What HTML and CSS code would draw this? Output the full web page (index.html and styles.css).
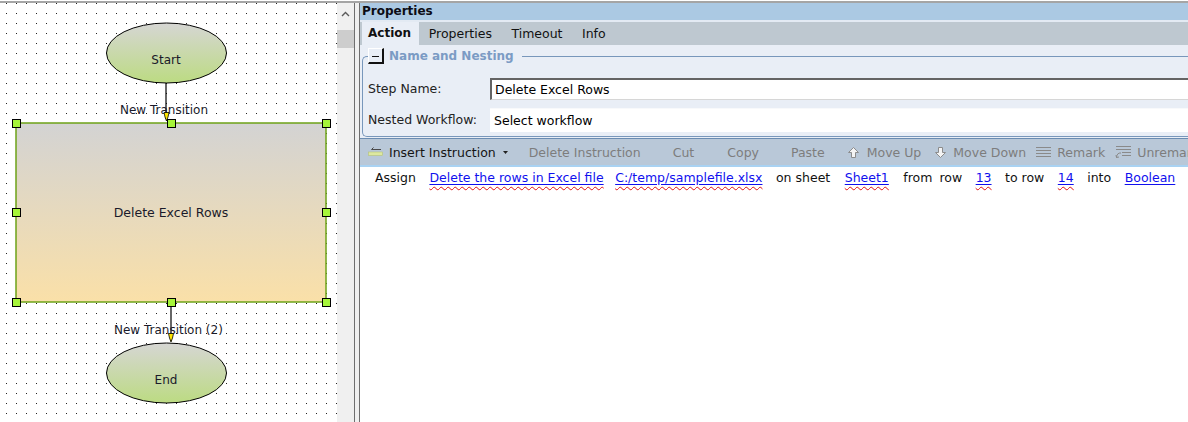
FILE: index.html
```html
<!DOCTYPE html>
<html>
<head>
<meta charset="utf-8">
<title>Workflow</title>
<link rel="stylesheet" href="styles.css">
</head>
<body>
<div class="app">
  <div class="canvas">
    <svg class="diagram" width="337" height="419" viewBox="0 3 337 419">
      <defs>
        <pattern id="dots" x="0" y="0" width="10" height="10" patternUnits="userSpaceOnUse">
          <rect x="6" y="3" width="1" height="1" fill="#202020"/>
        </pattern>
        <linearGradient id="gEll" x1="0" y1="0" x2="0" y2="1">
          <stop offset="0" stop-color="#d6d6d4"/>
          <stop offset="1" stop-color="#bcdb82"/>
        </linearGradient>
        <linearGradient id="gRect" x1="0" y1="0" x2="0" y2="1">
          <stop offset="0" stop-color="#d3d3d3"/>
          <stop offset="1" stop-color="#fae0a8"/>
        </linearGradient>
      </defs>
      <rect x="0" y="3" width="337" height="419" fill="url(#dots)" shape-rendering="crispEdges"/>
      <line x1="166" y1="83" x2="166" y2="119" stroke="#000" stroke-width="1.2"/>
      <ellipse cx="166.5" cy="53" rx="60" ry="30" fill="url(#gEll)" stroke="#000" stroke-width="1"/>
      <text class="lbl" x="166" y="64" text-anchor="middle">Start</text>
      <text class="lbl" x="120" y="114">New Transition</text>
      <polygon points="164,112.5 169,112.5 168,117 166.5,121 165,117" fill="#ffe600" stroke="#000" stroke-width="0.8"/>

      <rect x="16" y="123" width="310" height="179" fill="url(#gRect)" stroke="#6ea318" stroke-width="1.5"/>
      <text class="lbl node" x="171" y="217" text-anchor="middle">Delete Excel Rows</text>

      <line x1="171" y1="302" x2="171" y2="341" stroke="#000" stroke-width="1.2"/>
      <text class="lbl" x="114" y="334">New Transition (2)</text>
      <polygon points="168.5,333.5 173.5,333.5 172.5,338 171,342 169.5,338" fill="#ffe600" stroke="#000" stroke-width="0.8"/>
      <ellipse cx="166.5" cy="373" rx="60" ry="30" fill="url(#gEll)" stroke="#000" stroke-width="1"/>
      <text class="lbl" x="166" y="384" text-anchor="middle">End</text>

      <g fill="#a6f53a" stroke="#000" stroke-width="1">
        <rect x="12.5" y="119.5" width="8" height="8"/>
        <rect x="167.5" y="119.5" width="8" height="8"/>
        <rect x="322.5" y="119.5" width="8" height="8"/>
        <rect x="12.5" y="208.5" width="8" height="8"/>
        <rect x="322.5" y="208.5" width="8" height="8"/>
        <rect x="12.5" y="298.5" width="8" height="8"/>
        <rect x="167.5" y="298.5" width="8" height="8"/>
        <rect x="322.5" y="298.5" width="8" height="8"/>
      </g>
    </svg>
  </div>

  <div class="vscroll">
    <svg class="up" width="9" height="6" viewBox="0 0 9 6"><path d="M1 5 L4.5 1.5 L8 5" fill="none" stroke="#5a5a5a" stroke-width="1.4"/></svg>
    <div class="thumb"></div>
  </div>

  <div class="splitter"></div>

  <div class="panel">
    <div class="ptitle">Properties</div>
    <div class="tabs">
      <div class="tab active">Action</div>
      <div class="tab">Properties</div>
      <div class="tab">Timeout</div>
      <div class="tab">Info</div>
    </div>

    <fieldset class="group">
      <legend><span class="collapse"><span class="minus"></span></span><span>Name and Nesting</span></legend>
      <div class="fields">
        <div class="label">Step Name:</div>
        <div class="inp1">Delete Excel Rows</div>
        <div class="label">Nested Workflow:</div>
        <div class="inp2">Select workflow</div>
      </div>
    </fieldset>

    <div class="toolbar">
      <div class="tbtn ins">
        <svg width="15" height="10" viewBox="0 0 15 10"><path d="M5.5 0.5 L3.5 2.5 L13 2.5" fill="none" stroke="#4a4a4a" stroke-width="1"/><rect x="0.5" y="5" width="14" height="3.5" fill="#dde8a0" stroke="#b5c27a" stroke-width="0.6"/></svg>
        <span class="on">Insert Instruction</span>
        <svg class="caret" width="5" height="3" viewBox="0 0 5 3"><path d="M0 0 H5 L2.5 3 Z" fill="#222"/></svg>
      </div>
      <div class="tbtn del">Delete Instruction</div>
      <div class="tbtn cut">Cut</div>
      <div class="tbtn copy">Copy</div>
      <div class="tbtn paste">Paste</div>
      <div class="tbtn mup">
        <svg width="13" height="13" viewBox="0 0 13 13"><path d="M6.5 1.5 L11.5 6.5 L8.5 6.5 L8.5 11.5 L4.5 11.5 L4.5 6.5 L1.5 6.5 Z" fill="#f4f4f4" stroke="#8c8c8c" stroke-width="1"/></svg>
        <span>Move Up</span>
      </div>
      <div class="tbtn mdown">
        <svg width="13" height="13" viewBox="0 0 13 13"><path d="M6.5 11.5 L11.5 6.5 L8.5 6.5 L8.5 1.5 L4.5 1.5 L4.5 6.5 L1.5 6.5 Z" fill="#f4f4f4" stroke="#8c8c8c" stroke-width="1"/></svg>
        <span>Move Down</span>
      </div>
      <div class="tbtn remark">
        <svg width="15" height="13" viewBox="0 0 15 13"><g stroke="#8a8a8a" stroke-width="1"><path d="M0 1.5 H15"/><path d="M0 4.5 H15"/><path d="M0 7.5 H15"/><path d="M0 10.5 H15"/></g></svg>
        <span>Remark</span>
      </div>
      <div class="tbtn unremark">
        <svg width="16" height="14" viewBox="0 0 16 14"><g stroke="#8a8a8a" stroke-width="1" fill="none"><path d="M1 1.5 H16"/><path d="M1 4.5 H16"/><path d="M7 7.5 H16"/><path d="M7 10.5 H16"/><path d="M6 8 Q2 7.5 1.5 12.5"/><path d="M1 10 L1.5 12.5 L4 12"/></g></svg>
        <span>Unremark</span>
      </div>
    </div>

    <div class="list">
      <span>Assign</span>
      <span class="err"><a class="lnk">Delete the rows in Excel file</a></span>
      <span class="err"><a class="lnk">C:/temp/samplefile.xlsx</a></span>
      <span>on sheet</span>
      <span class="err"><a class="lnk">Sheet1</a></span>
      <span class="fr">from row</span>
      <span class="err"><a class="lnk">13</a></span>
      <span>to row</span>
      <span class="err"><a class="lnk">14</a></span>
      <span>into</span>
      <a class="lnk">Boolean</a>
    </div>
  </div>
</div>
</body>
</html>
```

FILE: styles.css
```css
* { box-sizing: border-box; }
html, body { margin: 0; padding: 0; }
body {
  width: 1188px;
  height: 422px;
  overflow: hidden;
  background: #fff;
  font-family: "DejaVu Sans", Verdana, sans-serif;
  font-size: 12.5px;
  color: #111;
  padding-top: 1px;
}
.app {
  display: flex;
  height: 421px;
  border-top: 2px solid #a5a5a5;
}

/* ---------- diagram canvas ---------- */
.canvas {
  width: 337px;
  flex: none;
  background: #fff;
}
.diagram { display: block; }
.lbl {
  font-family: "DejaVu Sans", Verdana, sans-serif;
  font-size: 12px;
  fill: #1a1a2a;
}
.lbl.node { font-size: 12.5px; }

/* ---------- scrollbar & splitter ---------- */
.vscroll {
  width: 17px;
  flex: none;
  background: #f0f0f0;
  display: flex;
  flex-direction: column;
  align-items: center;
}
.vscroll .up { margin-top: 8px; display: block; }
.vscroll .thumb {
  margin-top: 13px;
  width: 17px;
  height: 18px;
  background: #cdcdcd;
}
.splitter {
  width: 6px;
  flex: none;
  background: #f0f0f0;
  border-left: 1px solid #6f6f6f;
  border-right: 1px solid #6f6f6f;
}

/* ---------- properties panel ---------- */
.panel {
  flex: 1;
  min-width: 0;
  overflow: hidden;
  background: #e9eef6;
  display: flex;
  flex-direction: column;
}
.ptitle {
  height: 19px;
  line-height: 17px;
  background: #abc9e3;
  border-bottom: 2px solid #e3eaf3;
  font-weight: bold;
  font-size: 12px;
  padding-left: 2px;
  color: #0c0c14;
}
.tabs {
  height: 23px;
  flex: none;
  background: #bec8d0;
  display: flex;
  padding-left: 2px;
}
.tab {
  line-height: 23px;
  padding: 0 9.75px;
  color: #111;
}
.tab.active {
  width: 57px;
  padding: 0 0 0 6px;
  background: #e9eef6;
  font-weight: bold;
  font-size: 12px;
}

.group {
  margin: 3px 0 0 2px;
  padding: 0 0 4px 5px;
  border: 1px solid #7897bb;
  border-right: 0;
  border-radius: 5px 0 0 5px;
  min-width: 0;
  flex: none;
}
.group legend {
  padding: 0 8px 0 0;
  margin: 0;
  height: 16px;
  display: flex;
  align-items: center;
  gap: 5px;
  font-weight: bold;
  font-size: 12px;
  color: #7b9bc4;
}
.collapse {
  width: 16px;
  height: 16px;
  border-top: 1px solid #fff;
  border-left: 1px solid #fff;
  border-right: 2px solid #111;
  border-bottom: 2px solid #111;
  display: flex;
  align-items: center;
  justify-content: center;
  background: #e9eef6;
}
.minus {
  width: 7px;
  height: 1px;
  background: #111;
  margin-top: 1px;
}
.fields {
  display: grid;
  grid-template-columns: 122px 900px;
  row-gap: 8px;
  align-items: center;
  padding-top: 14px;
  color: #222;
}
.label { line-height: 16px; }
.inp1 {
  height: 22px;
  background: #fff;
  border-top: 2px solid #646464;
  border-left: 2px solid #646464;
  border-bottom: 1px solid #d6d6d6;
  padding-left: 3px;
  line-height: 19px;
  color: #000;
}
.inp2 {
  height: 24px;
  background: #fff;
  border-top: 1px solid #f8f9fb;
  padding-left: 4px;
  line-height: 23px;
  color: #000;
}

/* ---------- toolbar ---------- */
.toolbar {
  height: 29px;
  flex: none;
  margin-top: 1px;
  border-top: 1px solid #6b8cb2;
  border-bottom: 2px solid #a9d2f2;
  background: #b9c8d8;
  display: flex;
  align-items: center;
  padding-left: 8px;
  color: #7d7d7d;
  white-space: nowrap;
}
.tbtn { display: flex; align-items: center; }
.tbtn svg { display: block; flex: none; }
.tbtn .on { color: #141414; }
.ins { gap: 6px; }
.ins .caret { margin-left: 1px; }
.del { margin-left: 21px; }
.cut { margin-left: 32px; }
.copy { margin-left: 33px; }
.paste { margin-left: 32px; }
.mup { margin-left: 22px; gap: 7px; }
.mdown { margin-left: 13px; gap: 6px; }
.remark { margin-left: 10px; gap: 6px; }
.unremark { margin-left: 10px; gap: 6px; }

/* ---------- instruction list ---------- */
.list {
  flex: 1;
  background: #fff;
  display: flex;
  align-items: flex-start;
  gap: 13.5px;
  padding: 3px 0 0 15px;
  line-height: 16px;
  color: #111;
  white-space: nowrap;
}
.list > :nth-child(3) { margin-left: -2px; }
.list > :nth-child(5) { margin-left: 1px; }
.list > :nth-child(6) { margin-left: 1px; }
.lnk {
  color: #1010ee;
  text-decoration: underline;
  text-decoration-color: #1010ee;
  text-underline-offset: 2px;
}
.err {
  text-decoration: underline wavy #e01010;
  text-decoration-thickness: 1px;
  text-underline-offset: 4px;
}
.fr { word-spacing: 3px; }
```
